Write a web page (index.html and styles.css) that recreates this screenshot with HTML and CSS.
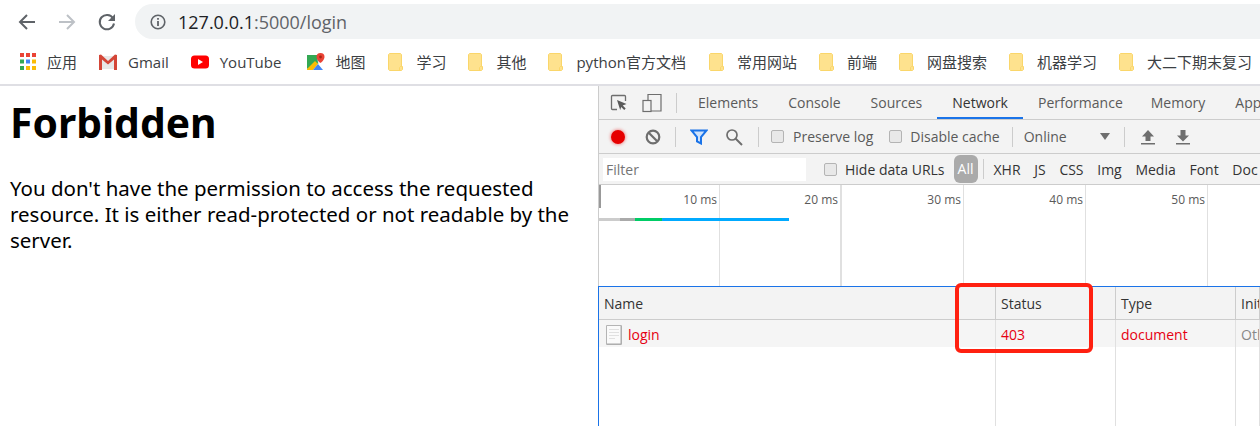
FILE: index.html
```html
<!DOCTYPE html>
<html lang="en">
<head>
<meta charset="utf-8">
<title>Forbidden</title>
<link rel="stylesheet" href="styles.css">
</head>
<body>
<header class="chrome">
  <div class="nav">
    <svg class="nav-icon" width="20" height="20" viewBox="0 0 20 20"><path d="M18 10H4M10 3l-7 7 7 7" fill="none" stroke="#5f6368" stroke-width="2"/></svg>
    <svg class="nav-icon" width="20" height="20" viewBox="0 0 20 20"><path d="M2 10h14M10 3l7 7-7 7" fill="none" stroke="#bdc1c6" stroke-width="2"/></svg>
    <svg class="nav-icon" width="20" height="20" viewBox="0 0 20 20"><path d="M16 6.200A7.200 7.200 0 1 0 17 11.500" fill="none" stroke="#5f6368" stroke-width="2"/><path d="M18 2v7h-7z" fill="#5f6368"/></svg>
    <div class="omnibox">
      <svg width="16" height="16" viewBox="0 0 16 16"><circle cx="8" cy="8" r="6.800" fill="none" stroke="#5f6368" stroke-width="1.600"/><path d="M7.100 7h1.800v5H7.100zM7.100 4h1.800v1.800H7.100z" fill="#5f6368"/></svg>
      <span class="url"><span class="host">127.0.0.1</span>:5000/login</span>
    </div>
  </div>
  <div class="bookmarks">
    <span class="bm bm-apps">
      <svg width="16" height="17" viewBox="0 0 16 17">
        <path fill="#ea4335" d="M0 0h4v4H0zM6 0h4v4H6zM12 0h4v4h-4z"/>
        <path fill="#34a853" d="M0 6.500h4v4H0z"/><path fill="#4285f4" d="M6 6.500h4v4H6z"/><path fill="#fbbc05" d="M12 6.500h4v4h-4z"/>
        <path fill="#34a853" d="M0 13h4v4H0z"/><path fill="#fbbc05" d="M6 13h4v4H6zM12 13h4v4h-4z"/>
      </svg>应用</span>
    <span class="bm">
      <svg width="18" height="16" viewBox="0 0 18 16"><path fill="#e8e8e8" d="M2 2h14v13H2z"/><path fill="#d44638" d="M0 1l2-.5L9 7l7-6.500 2 .5v15h-3V5.500L9 10.500 3 5.500V16H0z"/></svg>Gmail</span>
    <span class="bm bm-yt">
      <svg width="18" height="14" viewBox="0 0 18 14"><rect width="18" height="13" y=".5" rx="3.500" fill="#f00"/><path d="M7 4l5 3-5 3z" fill="#fff"/></svg>YouTube</span>
    <span class="bm bm-map">
      <svg width="18" height="18" viewBox="0 0 18 18"><path fill="#34a853" d="M0 2h12v8L0 16z"/><path fill="#fbbc05" d="M0 16l8-8 3 3-5 6H0z"/><path fill="#4285f4" d="M6 17l5-6 5 6z"/><path fill="#e8eaed" d="M10 2h4v8h-3z"/><path fill="#ea4335" d="M13.500 0a4 4 0 0 1 4 4c0 3-4 6-4 6s-4-3-4-6a4 4 0 0 1 4-4z"/><circle cx="13.500" cy="4" r="1.400" fill="#a52714"/></svg>地图</span>
    <span class="bm"><svg class="folder" width="16" height="18" viewBox="0 0 16 18"><path d="M1.500.5h11l1 1v12h1v3l-1 1h-12l-1-1v-15z" fill="#fee28e" stroke="#fad66a"/><path d="M11.500 17.500v-3l1-1h1" fill="none" stroke="#fad66a"/></svg>学习</span>
    <span class="bm"><svg class="folder" width="16" height="18" viewBox="0 0 16 18"><path d="M1.500.5h11l1 1v12h1v3l-1 1h-12l-1-1v-15z" fill="#fee28e" stroke="#fad66a"/><path d="M11.500 17.500v-3l1-1h1" fill="none" stroke="#fad66a"/></svg>其他</span>
    <span class="bm bm-py"><svg class="folder" width="16" height="18" viewBox="0 0 16 18"><path d="M1.500.5h11l1 1v12h1v3l-1 1h-12l-1-1v-15z" fill="#fee28e" stroke="#fad66a"/><path d="M11.500 17.500v-3l1-1h1" fill="none" stroke="#fad66a"/></svg>python官方文档</span>
    <span class="bm"><svg class="folder" width="16" height="18" viewBox="0 0 16 18"><path d="M1.500.5h11l1 1v12h1v3l-1 1h-12l-1-1v-15z" fill="#fee28e" stroke="#fad66a"/><path d="M11.500 17.500v-3l1-1h1" fill="none" stroke="#fad66a"/></svg>常用网站</span>
    <span class="bm"><svg class="folder" width="16" height="18" viewBox="0 0 16 18"><path d="M1.500.5h11l1 1v12h1v3l-1 1h-12l-1-1v-15z" fill="#fee28e" stroke="#fad66a"/><path d="M11.500 17.500v-3l1-1h1" fill="none" stroke="#fad66a"/></svg>前端</span>
    <span class="bm"><svg class="folder" width="16" height="18" viewBox="0 0 16 18"><path d="M1.500.5h11l1 1v12h1v3l-1 1h-12l-1-1v-15z" fill="#fee28e" stroke="#fad66a"/><path d="M11.500 17.500v-3l1-1h1" fill="none" stroke="#fad66a"/></svg>网盘搜索</span>
    <span class="bm"><svg class="folder" width="16" height="18" viewBox="0 0 16 18"><path d="M1.500.5h11l1 1v12h1v3l-1 1h-12l-1-1v-15z" fill="#fee28e" stroke="#fad66a"/><path d="M11.500 17.500v-3l1-1h1" fill="none" stroke="#fad66a"/></svg>机器学习</span>
    <span class="bm"><svg class="folder" width="16" height="18" viewBox="0 0 16 18"><path d="M1.500.5h11l1 1v12h1v3l-1 1h-12l-1-1v-15z" fill="#fee28e" stroke="#fad66a"/><path d="M11.500 17.500v-3l1-1h1" fill="none" stroke="#fad66a"/></svg>大二下期末复习</span>
  </div>
</header>
<main class="main">
  <section class="page">
    <h1>Forbidden</h1>
    <p>You don't have the permission to access the requested resource. It is either read-protected or not readable by the server.</p>
  </section>
  <section class="devtools">
    <div class="tabs">
      <svg class="dt-inspect" width="18" height="18" viewBox="0 0 18 18"><path d="M7 15.500H2.500a1 1 0 0 1-1-1V2.500a1 1 0 0 1 1-1h12a1 1 0 0 1 1 1V7" fill="none" stroke="#6e6e6e" stroke-width="1.300"/><path d="M7 6l9.500 4-3.800 1.500 3 3-1.500 1.500-3-3L10.200 16z" fill="#5a5a5a"/></svg>
      <svg class="dt-device" width="20" height="20" viewBox="0 0 20 20"><path d="M6 7V1.500h13V18H9" fill="none" stroke="#6e6e6e" stroke-width="1.200"/><rect x="1" y="7.500" width="8" height="11" fill="none" stroke="#6e6e6e" stroke-width="1.200"/></svg>
      <i class="sep sep-tabs"></i>
      <span class="tab">Elements</span>
      <span class="tab">Console</span>
      <span class="tab">Sources</span>
      <span class="tab active">Network</span>
      <span class="tab tab-perf">Performance</span>
      <span class="tab">Memory</span>
      <span class="tab">Application</span>
    </div>
    <div class="toolbar">
      <span class="record"></span>
      <svg class="dt-clear" width="16" height="16" viewBox="0 0 16 16"><circle cx="8" cy="8" r="6.300" fill="none" stroke="#6e6e6e" stroke-width="2.200"/><path d="M3.500 3.500l9 9" stroke="#6e6e6e" stroke-width="2.200"/></svg>
      <i class="sep sep-a"></i>
      <svg class="dt-filter" width="18" height="16" viewBox="0 0 18 16"><path d="M1.500 1.500h15L11 8v6.500L7 12.500V8z" fill="#cfe2fb" stroke="#1a73e8" stroke-width="2"/></svg>
      <svg class="dt-search" width="18" height="18" viewBox="0 0 18 18"><circle cx="7" cy="7" r="5" fill="none" stroke="#6e6e6e" stroke-width="1.700"/><path d="M10.500 10.500l6.500 6.500" stroke="#6e6e6e" stroke-width="2"/></svg>
      <i class="sep sep-b"></i>
      <span class="check check-preserve"></span><span class="lbl lbl-preserve">Preserve log</span>
      <span class="check check-cache"></span><span class="lbl lbl-cache">Disable cache</span>
      <i class="sep sep-c"></i>
      <span class="lbl lbl-online">Online</span>
      <span class="caret"></span>
      <i class="sep sep-d"></i>
      <svg class="dt-up" width="14" height="16" viewBox="0 0 14 16"><path d="M7 1l6 6.500H9.500V12h-5V7.500H1zM0 14h14v1.500H0z" fill="#6e6e6e"/></svg>
      <svg class="dt-down" width="14" height="16" viewBox="0 0 14 16"><path d="M4.500 1h5v5.500H13L7 12.500 1 6.500h3.500zM0 14h14v1.500H0z" fill="#6e6e6e"/></svg>
    </div>
    <div class="filterbar">
      <span class="filter-input">Filter</span>
      <span class="check check-hide"></span><span class="lbl lbl-hide">Hide data URLs</span>
      <span class="pill">All</span>
      <i class="sep sep-e"></i>
      <span class="ft ft-first">XHR</span><span class="ft">JS</span><span class="ft">CSS</span><span class="ft">Img</span><span class="ft">Media</span><span class="ft">Font</span><span class="ft">Doc</span>
    </div>
    <div class="overview">
      <div class="tick t1">10 ms</div>
      <div class="tick t2">20 ms</div>
      <div class="tick t3">30 ms</div>
      <div class="tick t4">40 ms</div>
      <div class="tick t5">50 ms</div>
      <div class="tick t6"></div>
      <span class="marker"></span>
      <div class="bar">
        <span class="b-stall"></span><span class="b-wait"></span><span class="b-ttfb"></span><span class="b-down"></span>
      </div>
    </div>
    <div class="table">
      <div class="cell head">Name</div>
      <div class="cell head">Status</div>
      <div class="cell head">Type</div>
      <div class="cell head">Initiator</div>
      <div class="cell row err name-cell">
        <svg width="16" height="20" viewBox="0 0 16 20"><path d="M.5.5h15v19H.5z" fill="#fafafa" stroke="#b4b4b4"/><path d="M15 1v18H1" fill="none" stroke="#a8a8a8"/><path d="M3 4.500h10M3 7.500h10M3 10.500h10M3 13.500h6" stroke="#e0e0e0"/></svg>
        login</div>
      <div class="cell row err">403</div>
      <div class="cell row err">document</div>
      <div class="cell row other">Other</div>
      <div class="cell fill"></div><div class="cell fill"></div><div class="cell fill"></div><div class="cell fill"></div>
      <div class="callout"></div>
    </div>
  </section>
</main>
</body>
</html>
```

FILE: styles.css
```css
* { box-sizing: border-box; }
html, body { margin: 0; padding: 0; }
body {
  width: 1260px; height: 426px; overflow: hidden; background: #fff;
  font-family: "Open Sans", "Noto Sans CJK SC", sans-serif; color: #303942;
}
.chrome { height: 86px; border-bottom: 2px solid #dfdfe4; }
.nav { height: 43px; display: flex; align-items: center; }
.nav-icon { margin-left: 17px; margin-right: 3px; flex: none; }
.omnibox {
  margin-left: 15px; flex: 1; height: 35px; border-radius: 17.5px 0 0 17.5px;
  background: #f1f3f4; display: flex; align-items: center; padding-left: 15px;
}
.url { margin-left: 12px; font-size: 18px; color: #5f6368; }
.host { color: #202124; }
.bookmarks { height: 41px; display: flex; align-items: center; padding: 0 0 4px 20px; white-space: nowrap; }
.bm { display: flex; align-items: center; font-size: 15px; color: #3c4043; margin-right: 22px; }
.bm svg { flex: none; margin-right: 11px; }
.bm-yt { margin-right: 26px; }
.bm-map { margin-right: 23px; }
.bm-map svg { margin-right: 10px; }
.bm-py { margin-right: 23px; }
.bm .folder { margin-right: 12px; }
.main { display: flex; height: 340px; }
.page { width: 598px; padding: 0 10px; color: #000; font-family: "Noto Sans", sans-serif; }
.page h1 { font-size: 40.800px; line-height: 54px; margin: 9px 0 26px; font-weight: 700; }
.page p { font-size: 20.480px; line-height: 26px; margin: 0; }
.devtools { flex: 1; min-width: 0; font-size: 14px; color: #5a5a5a; position: relative; overflow: hidden; background: #fff; }
.tabs, .toolbar, .filterbar { display: flex; align-items: center; background: #f3f3f3; border-left: 1px solid #ccc; border-bottom: 1px solid #ccc; white-space: nowrap; }
.tabs { height: 34px; }
.toolbar { height: 34px; }
.filterbar { height: 30px; border-bottom: 0; }
.sep { display: block; flex: none; width: 1px; height: 20px; background: #ccc; }
.dt-inspect { margin-left: 11px; flex: none; }
.dt-device { margin-left: 14px; flex: none; }
.sep-tabs { margin: 0 6px 0 14px; }
.tab { padding: 0 15px; height: 33px; line-height: 33px; }
.tab.active { color: #333; box-shadow: inset 0 -2px 0 #1a73e8; }
.tab-perf { margin-right: -2px; }
.record { margin-left: 12px; width: 14px; height: 14px; border-radius: 50%; background: #e60000; box-shadow: 0 0 3px 1px rgba(230,0,0,.35); flex: none; }
.dt-clear { margin-left: 20px; flex: none; }
.sep-a { margin-left: 14px; }
.dt-filter { margin-left: 14px; flex: none; }
.dt-search { margin-left: 17px; flex: none; }
.sep-b { margin-left: 15px; }
.check { display: block; flex: none; width: 13px; height: 13px; border-radius: 2px; background: #e8e8e8; border: 1px solid #b4b4b4; }
.check-preserve { margin-left: 12px; }
.lbl-preserve { margin-left: 9px; }
.check-cache { margin-left: 16px; }
.lbl-cache { margin-left: 8px; }
.sep-c { margin-left: 12px; }
.lbl-online { margin-left: 11px; }
.caret { margin-left: 33px; flex: none; width: 0; height: 0; border: 5px solid transparent; border-top: 7px solid #6e6e6e; border-bottom: 0; }
.sep-d { margin-left: 14px; }
.dt-up { margin-left: 16px; flex: none; }
.dt-down { margin-left: 21px; flex: none; }
.filter-input { margin-left: 4px; width: 203px; height: 23px; line-height: 23px; background: #fff; padding-left: 3px; color: #757575; flex: none; }
.check-hide { margin-left: 18px; }
.lbl-hide { margin-left: 8px; color: #333; }
.pill { margin-left: 9px; width: 24px; height: 28px; line-height: 28px; text-align: center; border-radius: 6px; background: #aaa; color: #fff; flex: none; }
.sep-e { margin-left: 5px; }
.ft { margin-left: 13.700px; color: #333; }
.ft-first { margin-left: 10px; }
.overview { height: 102px; display: flex; border-left: 1px solid #ccc; border-top: 1px solid #ccc; position: relative; background: #fff; }
.tick { width: 122px; flex: none; text-align: right; font-size: 12px; color: #5a5a5a; padding: 6px 2px 0 0; border-right: 1px solid #e0e0e0; }
.t1 { width: 121px; }
.t2 { border-right-width: 2px; }
.marker { position: absolute; left: 0; top: 0; width: 2px; height: 23px; background: #999; }
.bar { position: absolute; left: 0; top: 33px; display: flex; height: 3px; }
.bar span { display: block; height: 3px; }
.b-stall { width: 21px; background: #ccc; }
.b-wait { width: 15px; background: #aaa; }
.b-ttfb { width: 27px; background: #0c6; }
.b-down { width: 127px; background: #0af; }
.table {
  position: relative; height: 140px; display: grid;
  grid-template-columns: 397px 120px 120px 1fr; grid-template-rows: 33px 27px 1fr;
  border-left: 1px solid #1a73e8; border-top: 1px solid #1a73e8;
}
.cell { border-right: 1px solid #e0e0e0; padding-left: 5px; white-space: nowrap; overflow: hidden; }
.head { background: #f3f3f3; border-bottom: 1px solid #ccc; border-right-color: #ccc; padding-top: 1px; line-height: 31px; color: #333; }
.row { background: #f5f5f5; line-height: 29px; }
.err { color: #e60012; }
.other { color: #888; }
.name-cell { display: flex; align-items: center; padding: 2px 0 0 7px; gap: 6px; }
.callout { position: absolute; left: 356px; top: -4px; width: 138px; height: 70px; border: 4px solid #ff2010; border-radius: 6px; }
```
